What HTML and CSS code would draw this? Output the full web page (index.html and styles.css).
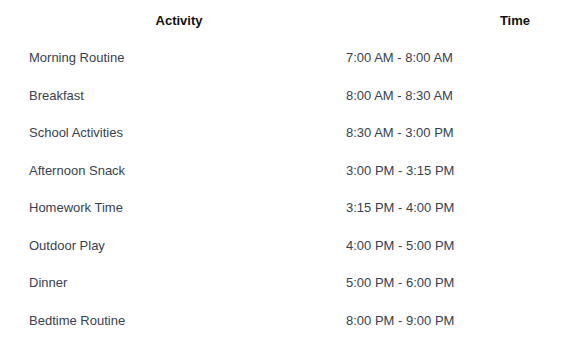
FILE: index.html
```html
<!DOCTYPE html>
<html lang="en">
<head>
<meta charset="utf-8">
<title>Daily Schedule</title>
<link rel="stylesheet" href="styles.css">
</head>
<body>
<div class="schedule">
  <div class="row head">
    <div class="cell c-activity">Activity</div>
    <div class="cell c-time">Time</div>
  </div>
  <div class="row"><div class="cell c-activity">Morning Routine</div><div class="cell c-time">7:00 AM - 8:00 AM</div></div>
  <div class="row"><div class="cell c-activity">Breakfast</div><div class="cell c-time">8:00 AM - 8:30 AM</div></div>
  <div class="row"><div class="cell c-activity">School Activities</div><div class="cell c-time">8:30 AM - 3:00 PM</div></div>
  <div class="row"><div class="cell c-activity">Afternoon Snack</div><div class="cell c-time">3:00 PM - 3:15 PM</div></div>
  <div class="row"><div class="cell c-activity">Homework Time</div><div class="cell c-time">3:15 PM - 4:00 PM</div></div>
  <div class="row"><div class="cell c-activity">Outdoor Play</div><div class="cell c-time">4:00 PM - 5:00 PM</div></div>
  <div class="row"><div class="cell c-activity">Dinner</div><div class="cell c-time">5:00 PM - 6:00 PM</div></div>
  <div class="row"><div class="cell c-activity">Bedtime Routine</div><div class="cell c-time">8:00 PM - 9:00 PM</div></div>
</div>
</body>
</html>
```
FILE: styles.css
```css
html, body {
  margin: 0;
  padding: 0;
  background: #ffffff;
}
body {
  font-family: "Liberation Sans", Arial, sans-serif;
  font-size: 13px;
  line-height: 17.5px;
  color: #374151;
}
.schedule {
  padding: 0 8px;
  display: flex;
  flex-direction: column;
}
.row {
  display: grid;
  grid-template-columns: 330px 1fr;
  height: 37.5px;
  box-sizing: border-box;
  padding: 10px 0;
}
.row.head {
  height: 39px;
  padding: 11.5px 0 10px;
  font-weight: bold;
  color: #111111;
}
.cell {
  white-space: nowrap;
}
.c-activity {
  padding-left: 21px;
}
.c-time {
  padding-left: 8px;
}
.head .c-activity {
  padding-left: 12px;
  text-align: center;
}
.head .c-time {
  padding-left: 0;
  padding-right: 32px;
  text-align: right;
}
```
